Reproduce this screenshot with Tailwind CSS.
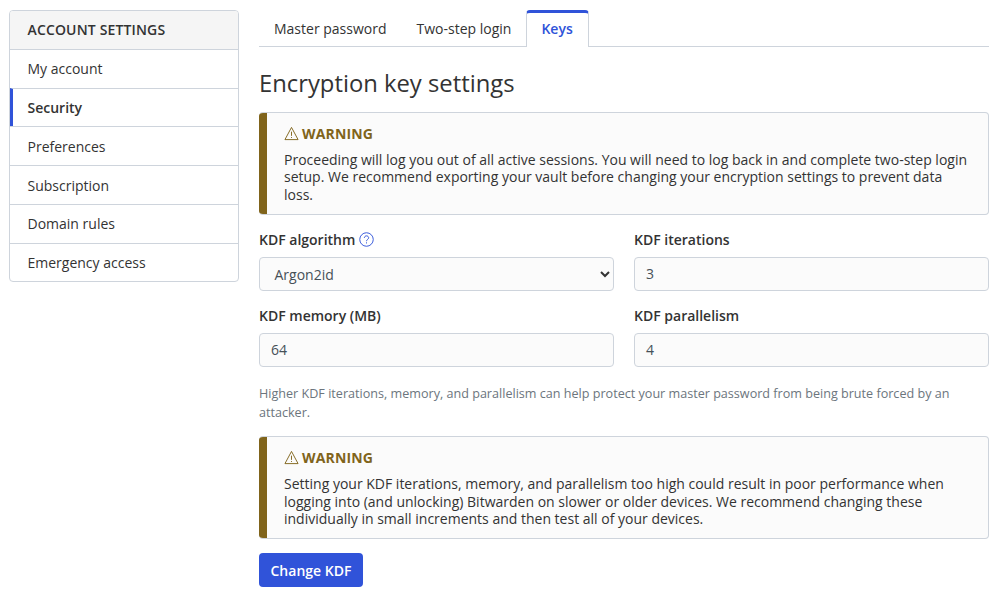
<!DOCTYPE html>
<html lang="en">
<head>
    <meta charset="UTF-8">
    <title>Keys</title>
    <script src="https://cdn.jsdelivr.net/npm/@tailwindcss/browser@4"></script>
</head>
<body class="bg-white text-[14px] leading-[21px] text-[#333] font-['Open_Sans',sans-serif]">
    <div class="flex gap-[20px] pt-[10px] pl-[9px] pr-[15px]">
        <!-- sidebar -->
        <div class="w-[230px] shrink-0 self-start border border-[#ced4dc] rounded-[4px] overflow-hidden">
            <div class="h-[38px] flex items-center pl-[17.5px] pb-[1px] bg-[#f5f5f5] font-semibold tracking-[0.15px]">ACCOUNT SETTINGS</div>
            <div class="h-[39px] flex items-center pl-[17.5px] pb-[1px] border-t border-[#ced4dc]">My account</div>
            <div class="h-[38px] flex items-center pl-[14.5px] border-t border-[#ced4dc] border-l-[3px] border-l-[#3053d9] font-semibold">Security</div>
            <div class="h-[39px] flex items-center pl-[17.5px] border-t border-[#ced4dc]">Preferences</div>
            <div class="h-[39px] flex items-center pl-[17.5px] border-t border-[#ced4dc]">Subscription</div>
            <div class="h-[39px] flex items-center pl-[17.5px] pb-[1px] border-t border-[#ced4dc]">Domain rules</div>
            <div class="h-[38px] flex items-center pl-[17.5px] border-t border-[#ced4dc]">Emergency access</div>
        </div>
        <!-- main -->
        <div class="w-[730px]">
            <div class="flex h-[37px] border-b border-[#ced4dc]">
                <div class="h-[36px] flex items-center px-[15px]">Master password</div>
                <div class="h-[36px] flex items-center px-[15px]">Two-step login</div>
                <div class="h-[37px] flex items-center pb-[3px] pl-[14px] pr-[15px] bg-white border border-[#ced4dc] border-b-0 border-t-[3px] border-t-[#3053d9] rounded-t-[4px] text-[#3053d9] font-semibold">Keys</div>
            </div>
            <h1 class="mt-[18px] text-[23.8px] leading-[36px] font-normal">Encryption key settings</h1>

            <div class="mt-[11px] h-[103px] flex border border-[#ced4dc] border-l-0 rounded-[4px] bg-[#fbfbfb] overflow-hidden">
                <div class="w-[8px] bg-[#80641b] shrink-0"></div>
                <div class="pl-[17px] pr-[16px] pt-[10px]">
                    <div class="flex items-center gap-[3px] h-[21px] font-bold tracking-[0.15px] text-[#80641b]">
                        <svg width="15" height="15" viewBox="0 0 16 16" fill="none" stroke="#80641b" stroke-width="1"><path d="M8 1.5 L15 14.5 H1 Z" stroke-linejoin="round"/><path d="M8 6v4.5M8 11.8v1"/></svg>
                        <span>WARNING</span>
                    </div>
                    <p class="mt-[6.5px] leading-[17.5px]">Proceeding will log you out of all active sessions. You will need to log back in and complete two-step login setup. We recommend exporting your vault before changing your encryption settings to prevent data loss.</p>
                </div>
            </div>

            <div class="mt-[14px] grid grid-cols-2 gap-x-[20px]">
                <div>
                    <div class="h-[21px] flex items-center gap-[3.5px] font-semibold">KDF algorithm
                        <svg width="15" height="15" viewBox="0 0 16 16" fill="none" stroke="#3053d9" stroke-width="1"><circle cx="8" cy="8" r="7.2"/><path d="M5.7 6.3c0-1.3 1.1-2.2 2.3-2.2s2.300.9 2.300 2c0 1.800-2.300 1.800-2.300 3.700M8 11v1.200"/></svg>
                    </div>
                    <div class="mt-[7px] h-[34px] flex items-center justify-between pl-[14.5px] pr-[3px] border border-[#ced4dc] rounded-[4px] bg-[#fbfbfb] text-[#465057]">
                        <span>Argon2id</span>
                        <svg width="10" height="10" viewBox="0 0 10 10" fill="none" stroke="#333" stroke-width="2"><path d="M1 3l4 4 4-4"/></svg>
                    </div>
                </div>
                <div>
                    <div class="h-[21px] flex items-center font-semibold">KDF iterations</div>
                    <div class="mt-[7px] h-[34px] flex items-center pl-[11px] pb-[1px] border border-[#ced4dc] rounded-[4px] bg-[#fbfbfb] text-[#465057]">3</div>
                </div>
                <div class="mt-[14px]">
                    <div class="h-[21px] flex items-center font-semibold">KDF memory (MB)</div>
                    <div class="mt-[7px] h-[34px] flex items-center pl-[11px] pb-[2px] border border-[#ced4dc] rounded-[4px] bg-[#fbfbfb] text-[#465057]">64</div>
                </div>
                <div class="mt-[14px]">
                    <div class="h-[21px] flex items-center font-semibold">KDF parallelism</div>
                    <div class="mt-[7px] h-[34px] flex items-center pl-[11px] pb-[2px] border border-[#ced4dc] rounded-[4px] bg-[#fbfbfb] text-[#465057]">4</div>
                </div>
            </div>

            <p class="mt-[16.5px] text-[12.6px] leading-[19px] text-[#6c757d]">Higher KDF iterations, memory, and parallelism can help protect your master password from being brute forced by an attacker.</p>

            <div class="mt-[14.5px] h-[103px] flex border border-[#ced4dc] border-l-0 rounded-[4px] bg-[#fbfbfb] overflow-hidden">
                <div class="w-[8px] bg-[#80641b] shrink-0"></div>
                <div class="pl-[17px] pr-[16px] pt-[10px]">
                    <div class="flex items-center gap-[3px] h-[21px] font-bold tracking-[0.15px] text-[#80641b]">
                        <svg width="15" height="15" viewBox="0 0 16 16" fill="none" stroke="#80641b" stroke-width="1"><path d="M8 1.5 L15 14.5 H1 Z" stroke-linejoin="round"/><path d="M8 6v4.5M8 11.8v1"/></svg>
                        <span>WARNING</span>
                    </div>
                    <p class="mt-[7px] leading-[17.5px]">Setting your KDF iterations, memory, and parallelism too high could result in poor performance when logging into (and unlocking) Bitwarden on slower or older devices. We recommend changing these individually in small increments and then test all of your devices.</p>
                </div>
            </div>

            <button class="mt-[14px] h-[34px] px-[11.5px] rounded-[4px] bg-[#3053d9] text-white font-semibold">Change KDF</button>
        </div>
    </div>
</body>
</html>
